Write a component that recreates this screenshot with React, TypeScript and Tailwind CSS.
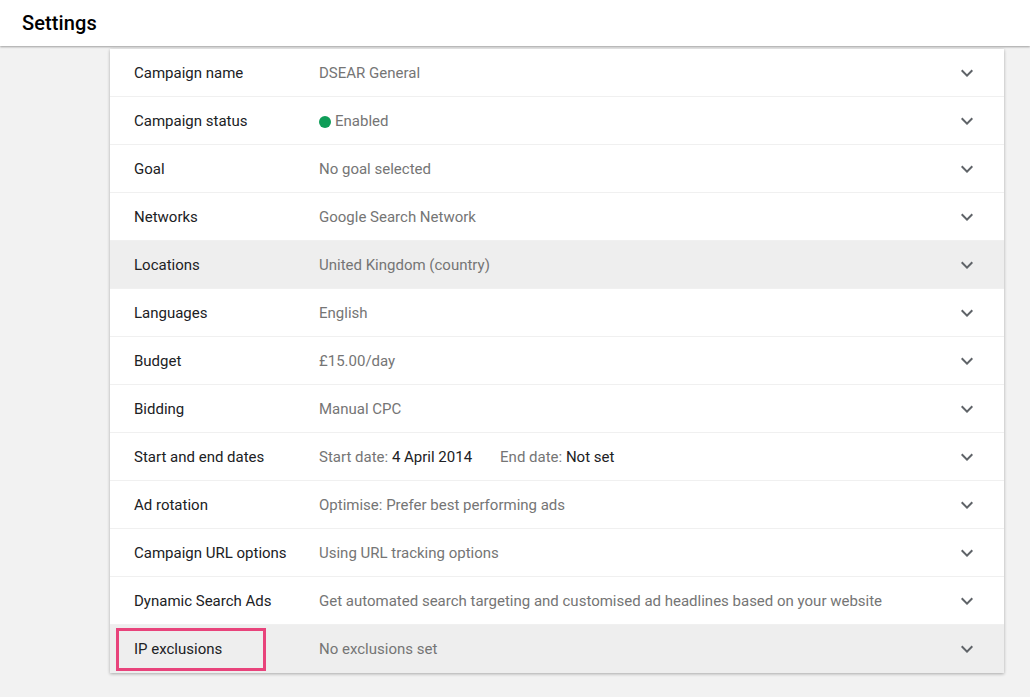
import React from "react";

type Row = { label: string; value: React.ReactNode; hl?: boolean; box?: boolean };

const Chevron = () => (
  <svg width="24" height="24" viewBox="0 0 24 24" className="shrink-0 -mt-[2px]">
    <path d="M16.59 8.59L12 13.17 7.41 8.59 6 10l6 6 6-6z" fill="#5f6368" />
  </svg>
);

const rows: Row[] = [
  { label: "Campaign name", value: "DSEAR General" },
  {
    label: "Campaign status",
    value: (
      <span className="flex items-center gap-[4px]">
        <span className="inline-block w-[12px] h-[12px] rounded-full bg-[#0f9d58]" />
        Enabled
      </span>
    ),
  },
  { label: "Goal", value: "No goal selected" },
  { label: "Networks", value: "Google Search Network" },
  { label: "Locations", value: "United Kingdom (country)", hl: true },
  { label: "Languages", value: "English" },
  { label: "Budget", value: "£15.00/day" },
  { label: "Bidding", value: "Manual CPC" },
  {
    label: "Start and end dates",
    value: (
      <span>
        Start date: <span className="text-[#202124]">4 April 2014</span>
        <span className="inline-block w-[28px]" />
        End date: <span className="text-[#202124]">Not set</span>
      </span>
    ),
  },
  { label: "Ad rotation", value: "Optimise: Prefer best performing ads" },
  { label: "Campaign URL options", value: "Using URL tracking options" },
  {
    label: "Dynamic Search Ads",
    value: "Get automated search targeting and customised ad headlines based on your website",
  },
  { label: "IP exclusions", value: "No exclusions set", hl: true, box: true },
];

export default function App() {
  return (
    <div
      className="w-[1030px] h-[697px] bg-[#f2f2f2] overflow-hidden"
      style={{ fontFamily: "Roboto, 'Liberation Sans', sans-serif" }}
    >
      <div className="h-[46px] bg-white flex items-center pl-[22px] shadow-[0_1px_2px_rgba(0,0,0,0.35)] relative z-10">
        <span className="text-[20px] font-medium text-[#000] tracking-[0.1px]">Settings</span>
      </div>
      <div className="pt-[3px] pl-[110px]">
        <div className="w-[894px] bg-white shadow-[0_1px_3px_rgba(0,0,0,0.3)]">
          {rows.map((r, i) => {
            const last = i === rows.length - 1;
            return (
              <div
                key={i}
                className={`relative h-[48px] flex items-center pl-[24px] pr-[25px] text-[15px] ${
                  r.hl ? "bg-[#eeeeee]" : "bg-white"
                } ${last ? "pt-[1px]" : "pt-[2px] border-b border-[#f0f0f0]"}`}
              >
                <div className="w-[185px] shrink-0 text-[#202124]">{r.label}</div>
                <div className="flex-1 text-[#757575]">{r.value}</div>
                <Chevron />
                {r.box && (
                  <div className="absolute left-[6px] top-[3px] w-[150px] h-[43px] border-[3px] border-[#e8437b]" />
                )}
              </div>
            );
          })}
        </div>
      </div>
    </div>
  );
}
